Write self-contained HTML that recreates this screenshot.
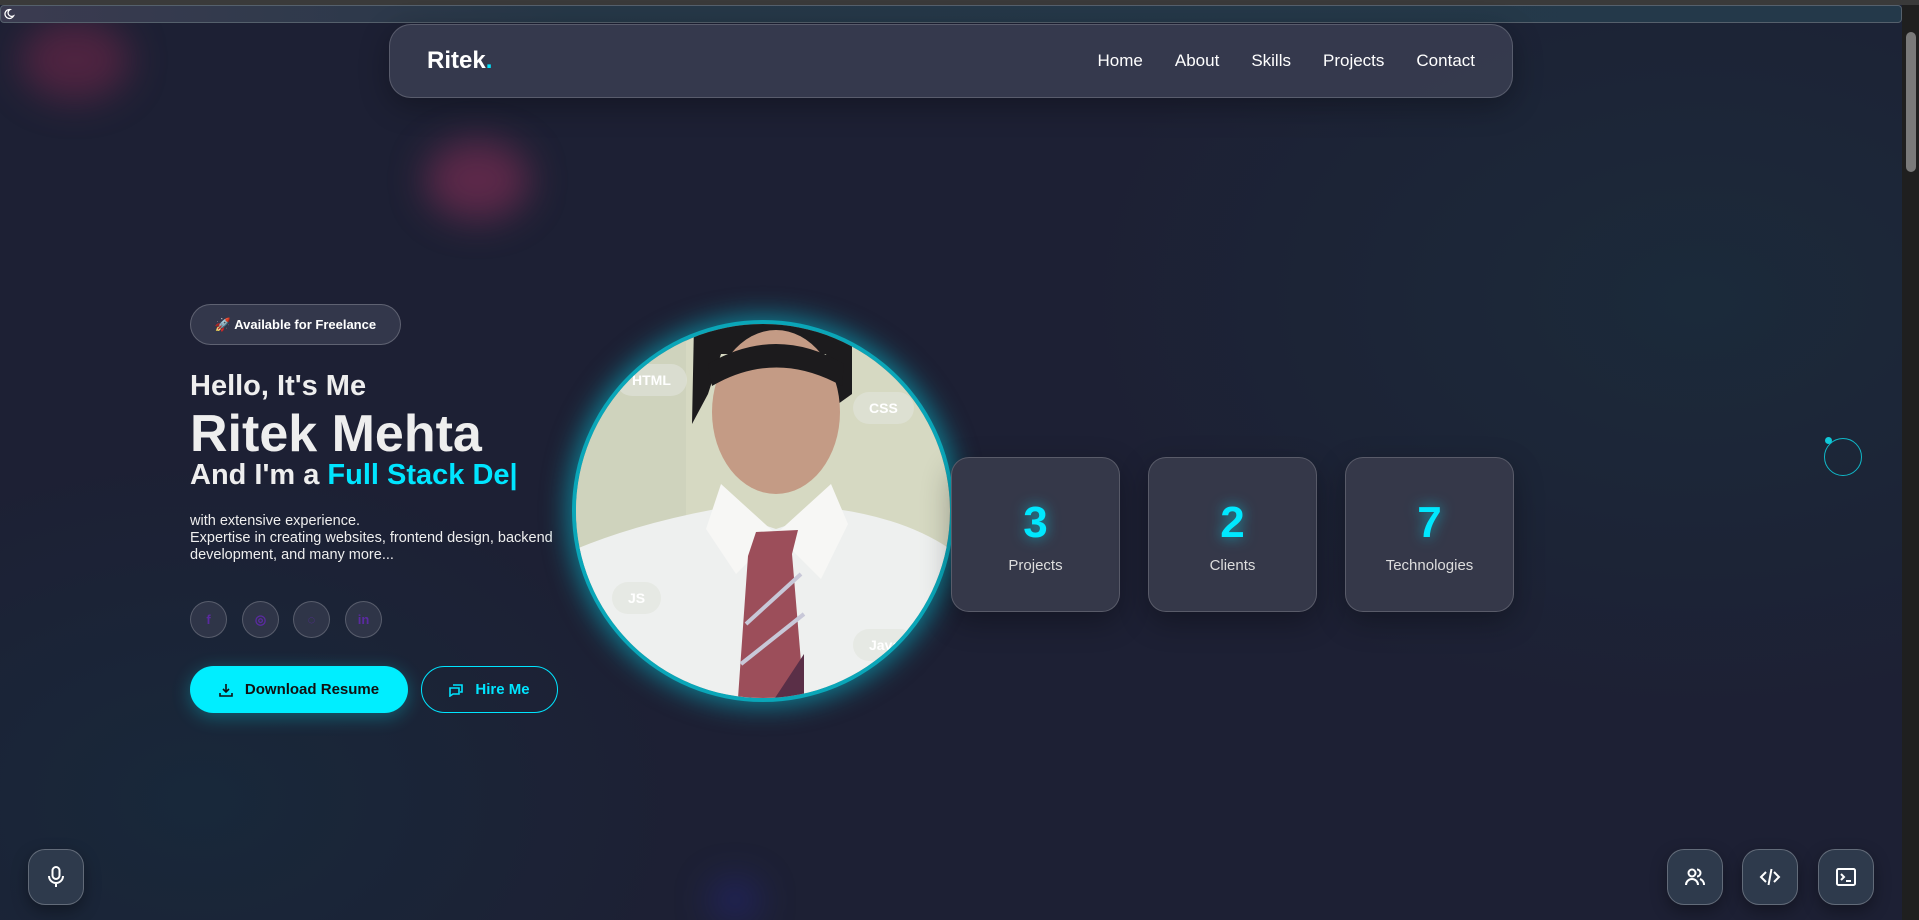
<!DOCTYPE html>
<html><head><meta charset="utf-8"><style>
*{margin:0;padding:0;box-sizing:border-box}
html,body{width:1919px;height:920px;overflow:hidden}
body{font-family:"Liberation Sans",Arial,sans-serif;color:#fff;position:relative;
background:radial-gradient(ellipse 900px 600px at 1700px 300px,#1b2a3a 0%,transparent 70%),radial-gradient(ellipse 700px 500px at 200px 800px,#18283a 0%,transparent 70%),#1d2034;}
.blob{position:absolute;border-radius:50%;filter:blur(18px)}
.abs{position:absolute}
.topbar{position:absolute;left:0;top:0;width:1919px;height:5px;background:#3a3a3a}
.urlbar{position:absolute;left:0;top:5px;width:1902px;height:18px;background:linear-gradient(90deg,#3b3b50,#263848 30%,#24394a);border:1px solid #55606c;border-radius:4px}
.scroll{position:absolute;right:0;top:5px;width:17px;height:915px;background:#1f1f1f}
.thumb{position:absolute;right:3px;top:27px;width:10px;height:140px;background:#7a7a7a;border-radius:5px}
nav{position:absolute;left:389px;top:24px;width:1124px;height:74px;border-radius:22px;background:rgba(62,66,86,.75);border:1px solid rgba(255,255,255,.18);box-shadow:0 8px 30px rgba(0,0,0,.3)}
.logo{position:absolute;left:37px;top:22px;font-size:24px;font-weight:bold}
.links{position:absolute;right:37px;top:26px;font-size:17px;display:flex;gap:32px}
.badge{position:absolute;left:190px;top:304px;width:211px;height:41px;border-radius:21px;background:#33374b;border:1px solid rgba(255,255,255,.22);font-size:13px;font-weight:bold;text-align:center;line-height:39px}
h1,h2{position:absolute;left:190px;font-weight:bold;color:#eee;white-space:nowrap}
.p{position:absolute;left:190px;top:513px;font-size:14.5px;line-height:17px;color:#eee;width:400px}
.soc{position:absolute;top:601px;width:37px;height:37px;border-radius:50%;background:#2f3548;border:1px solid rgba(255,255,255,.2);color:#5a2aa0;font-size:13px;font-weight:bold;text-align:center;line-height:35px}
.btn{position:absolute;top:666px;height:47px;border-radius:24px;font-size:15px;font-weight:bold;display:flex;align-items:center;justify-content:center;gap:12px}
.card{position:absolute;top:457px;width:169px;height:155px;border-radius:18px;background:#353849;border:1px solid rgba(255,255,255,.18);box-shadow:0 10px 30px rgba(0,0,0,.3);text-align:center}
.card b{display:block;margin-top:40px;font-size:44px;color:#00e8ff;text-shadow:0 0 14px rgba(0,232,255,.6)}
.card span{display:block;margin-top:9px;font-size:15px;color:#ddd}
.fb{position:absolute;top:849px;width:56px;height:56px;border-radius:17px;background:#2e3a4c;border:1px solid rgba(255,255,255,.25);display:flex;align-items:center;justify-content:center;box-shadow:0 6px 16px rgba(0,0,0,.35)}
.tag{position:absolute;height:32px;border-radius:16px;background:rgba(225,228,220,.6);color:#fff;font-size:14px;font-weight:bold;line-height:32px;padding:0 16px}
</style></head><body>
<div class="blob" style="left:20px;top:20px;width:110px;height:80px;background:rgba(140,40,80,.45)"></div>
<div class="blob" style="left:425px;top:140px;width:105px;height:80px;background:rgba(170,50,100,.45)"></div>
<div class="blob" style="left:710px;top:880px;width:50px;height:40px;background:rgba(40,40,160,.4)"></div>
<div class="topbar"></div>
<div class="urlbar"><svg class="abs" style="left:2px;top:2px" width="12" height="12" viewBox="0 0 12 12"><path d="M7 1.5A4.5 4.5 0 1 0 10.5 8 3.6 3.6 0 0 1 7 1.5z" fill="none" stroke="#fff" stroke-width="1.3"/></svg></div>
<div class="scroll"><div class="thumb"></div></div>

<nav><div class="logo">Ritek<span style="color:#00e5ff">.</span></div>
<div class="links"><span>Home</span><span>About</span><span>Skills</span><span>Projects</span><span>Contact</span></div></nav>

<div class="badge">🚀 Available for Freelance</div>
<h2 style="top:370px;font-size:29px">Hello, It's Me</h2>
<h1 style="top:404px;font-size:52px">Ritek Mehta</h1>
<h2 style="top:459px;font-size:29px">And I'm a <span style="color:#00e5ff">Full Stack De|</span></h2>
<div class="p">with extensive experience.<br>Expertise in creating websites, frontend design, backend development, and many more...</div>

<div class="soc" style="left:190px">f</div>
<div class="soc" style="left:242px">◎</div>
<div class="soc" style="left:293px">◌</div>
<div class="soc" style="left:345px">in</div>

<div class="btn" style="left:190px;width:218px;background:#00eeff;color:#111;box-shadow:0 4px 18px rgba(0,238,255,.3)"><svg width="14" height="14" viewBox="0 0 14 14"><path d="M7 1v8M4 6l3 3 3-3M1 10v3h12v-3" fill="none" stroke="#111" stroke-width="1.6"/></svg>Download Resume</div>
<div class="btn" style="left:421px;width:137px;border:1.5px solid #00e5ff;color:#00e5ff"><svg width="14" height="14" viewBox="0 0 14 14"><path d="M4 2h9v7h-2M1 5h9v6H4l-3 2z" fill="none" stroke="#00e5ff" stroke-width="1.6"/></svg>Hire Me</div>

<div class="abs" style="left:576px;top:324px;width:374px;height:374px;border-radius:50%;box-shadow:0 0 0 4px #0aa6b8,0 0 26px 8px rgba(0,210,230,.55);overflow:hidden">
<svg width="374" height="374" viewBox="0 0 374 374">
<rect width="374" height="374" fill="#d6d9c2"/>
<rect x="0" y="0" width="110" height="374" fill="#cfd3bd"/>
<path d="M118 0 L116 100 L132 70 L145 30 L250 30 L262 80 L276 70 L276 0Z" fill="#1c1b1d"/>
<ellipse cx="200" cy="88" rx="64" ry="82" fill="#c49b85"/>
<path d="M132 40 Q200 0 268 40 L266 62 Q200 25 136 62Z" fill="#1c1b1d"/>
<path d="M0 225 Q60 200 140 185 L200 205 L260 185 Q330 195 374 225 L374 374 L0 374Z" fill="#eef0ef"/>
<path d="M145 160 L200 210 L160 250 L130 205Z M255 160 L200 210 L245 255 L272 200Z" fill="#f7f7f5"/>
<path d="M180 208 L222 206 L216 230 L228 374 L162 374 L172 232Z" fill="#9c4e5a"/>
<path d="M170 300 L225 250 M165 340 L228 290" stroke="#c8c8d8" stroke-width="4"/>
<path d="M195 380 L228 330 L228 374Z" fill="#5a2f47"/>
</svg>
<div class="tag" style="left:40px;top:40px">HTML</div>
<div class="tag" style="left:277px;top:68px">CSS</div>
<div class="tag" style="left:36px;top:258px">JS</div>
<div class="tag" style="left:277px;top:305px">Java</div>
</div>

<div class="card" style="left:951px"><b>3</b><span>Projects</span></div>
<div class="card" style="left:1148px"><b>2</b><span>Clients</span></div>
<div class="card" style="left:1345px"><b>7</b><span>Technologies</span></div>

<div class="abs" style="left:1824px;top:438px;width:38px;height:38px;border-radius:50%;border:1.5px solid #10b8c8"></div>
<div class="abs" style="left:1825px;top:437px;width:7px;height:7px;border-radius:50%;background:#10c8d8"></div>

<div class="fb" style="left:28px"><svg width="22" height="24" viewBox="0 0 22 24"><rect x="7.5" y="2" width="7" height="12" rx="3.5" fill="none" stroke="#fff" stroke-width="2"/><path d="M4 11a7 7 0 0 0 14 0M11 18v4" fill="none" stroke="#fff" stroke-width="2"/></svg></div>
<div class="fb" style="left:1667px"><svg width="22" height="22" viewBox="0 0 22 22"><circle cx="8" cy="7" r="3.5" fill="none" stroke="#fff" stroke-width="2"/><path d="M2 19a6 6 0 0 1 12 0M13 3.5a3.5 3.5 0 0 1 0 7M16 13a6 6 0 0 1 4 6" fill="none" stroke="#fff" stroke-width="2"/></svg></div>
<div class="fb" style="left:1742px"><svg width="22" height="22" viewBox="0 0 22 22"><path d="M7 6l-5 5 5 5M15 6l5 5-5 5M12.5 3l-3 16" fill="none" stroke="#fff" stroke-width="2"/></svg></div>
<div class="fb" style="left:1818px"><svg width="22" height="22" viewBox="0 0 22 22"><rect x="2" y="3" width="18" height="16" rx="1.5" fill="none" stroke="#fff" stroke-width="2"/><path d="M6 8l3 3-3 3M11 15h5" fill="none" stroke="#fff" stroke-width="2"/></svg></div>
</body></html>
